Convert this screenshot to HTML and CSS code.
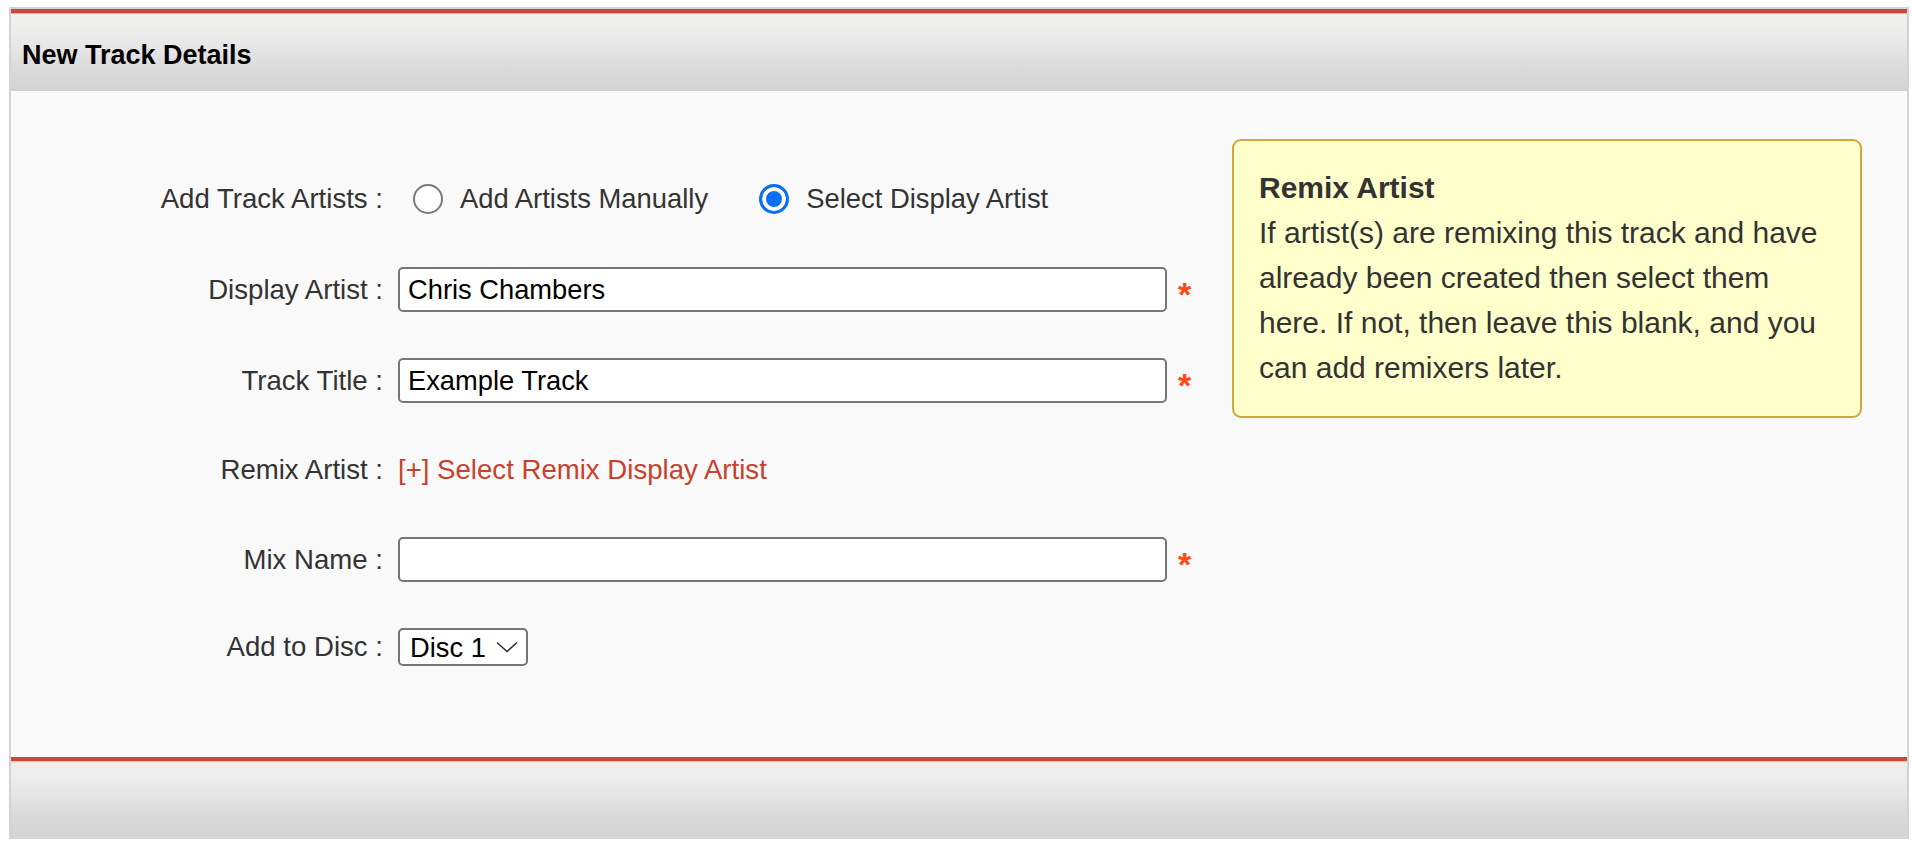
FILE: index.html
```html
<!DOCTYPE html>
<html lang="en">
<head>
<meta charset="utf-8">
<title>New Track Details</title>
<link rel="stylesheet" href="styles.css">
</head>
<body>
<section class="panel">
  <header class="panel-head">
    <h2 class="panel-title">New Track Details</h2>
  </header>
  <div class="panel-body">
    <form class="track-form">
      <div class="row row-radio">
        <span class="label">Add Track Artists :</span>
        <div class="field">
          <label class="radio-opt"><input type="radio" name="mode" class="radio"> Add Artists Manually</label>
          <label class="radio-opt opt-second"><input type="radio" name="mode" class="radio" checked> Select Display Artist</label>
        </div>
      </div>
      <div class="row row-input">
        <label class="label" for="da">Display Artist :</label>
        <div class="field">
          <input id="da" class="text-input" type="text" value="Chris Chambers">
          <span class="req">*</span>
        </div>
      </div>
      <div class="row row-input">
        <label class="label" for="tt">Track Title :</label>
        <div class="field">
          <input id="tt" class="text-input" type="text" value="Example Track">
          <span class="req">*</span>
        </div>
      </div>
      <div class="row row-link">
        <span class="label">Remix Artist :</span>
        <div class="field">
          <a class="add-link" href="#">[+] Select Remix Display Artist</a>
        </div>
      </div>
      <div class="row row-input">
        <label class="label" for="mn">Mix Name :</label>
        <div class="field">
          <input id="mn" class="text-input" type="text" value="">
          <span class="req">*</span>
        </div>
      </div>
      <div class="row row-select">
        <label class="label" for="disc">Add to Disc :</label>
        <div class="field">
          <div class="select-wrap">
            <select id="disc" class="select">
              <option>Disc 1</option>
            </select>
            <svg class="chevron" width="22" height="12" viewBox="0 0 22 12" aria-hidden="true"><path d="M1 1.5 L11 10.5 L21 1.5" fill="none" stroke="#333" stroke-width="1.6"/></svg>
          </div>
        </div>
      </div>
    </form>
    <aside class="help">
      <h3 class="help-title">Remix Artist</h3>
      <p class="help-text">If artist(s) are remixing this track and have already been created then select them here. If not, then leave this blank, and you can add remixers later.</p>
    </aside>
  </div>
  <footer class="panel-foot"></footer>
</section>
</body>
</html>
```

FILE: styles.css
```css
html, body {
  margin: 0;
  padding: 0;
  background: #ffffff;
}

body {
  font-family: "Liberation Sans", Arial, Helvetica, sans-serif;
  color: #333333;
}

.panel {
  margin: 7px 3px 0 9px;
  border: 2px solid #d3d3d3;
  border-bottom: none;
}

.panel-head {
  border-top: 4px solid #c44b3b;
  box-shadow: inset 0 1px 0 #e6ab9c;
  height: 82px;
  padding-top: 6px;
  box-sizing: border-box;
  background: linear-gradient(to bottom, #f3f1ec 0%, #eeeeee 20%, #e6e6e6 45%, #dbdbdb 70%, #d3d3d3 100%);
}

.panel-title {
  margin: 0;
  padding-left: 11px;
  font-size: 27px;
  font-weight: bold;
  line-height: 72px;
  color: #000000;
}

.panel-body {
  display: flex;
  align-items: flex-start;
  height: 666px;
  background: #f9f9f9;
}

.track-form {
  padding-top: 85px;
  display: flex;
  flex-direction: column;
  gap: 46px;
}

.row {
  display: flex;
  align-items: center;
}

.row-radio { height: 45px; }
.row-input { height: 45px; }
.row-link { height: 42px; }
.row-select { height: 38px; }

.label {
  width: 372px;
  text-align: right;
  font-size: 27.6px;
  color: #333333;
  flex: none;
}

.field {
  margin-left: 15px;
  display: flex;
  align-items: center;
  height: 100%;
}

.radio-opt {
  display: flex;
  align-items: center;
  font-size: 27.4px;
  color: #333333;
  gap: 17px;
}

.radio-opt:first-child {
  margin-left: 15px;
}

.opt-second {
  margin-left: 51px;
}

.radio {
  appearance: none;
  -webkit-appearance: none;
  margin: 0;
  width: 30px;
  height: 30px;
  border-radius: 50%;
  border: 2px solid #7a7a7a;
  background: #ffffff;
  box-sizing: border-box;
}

.radio:checked {
  border: 3px solid #0a6ff6;
  background: #0a6ff6;
  box-shadow: inset 0 0 0 4px #ffffff;
}

.text-input {
  width: 769px;
  height: 45px;
  box-sizing: border-box;
  border: 2px solid #767676;
  border-radius: 5px;
  background: #ffffff;
  padding: 0 8px;
  font-family: "Liberation Sans", Arial, Helvetica, sans-serif;
  font-size: 27.3px;
  color: #000000;
  outline: none;
}

.req {
  align-self: flex-start;
  margin-left: 11px;
  margin-top: 10px;
  font-size: 34px;
  line-height: 34px;
  font-weight: bold;
  color: #ff4a12;
}

.add-link {
  font-size: 27.6px;
  color: #c9412b;
  text-decoration: none;
}

.select-wrap {
  position: relative;
  display: flex;
}

.select {
  appearance: none;
  -webkit-appearance: none;
  width: 130px;
  height: 38px;
  box-sizing: border-box;
  border: 2px solid #767676;
  border-radius: 5px;
  background: #ffffff;
  padding: 0 0 0 10px;
  font-family: "Liberation Sans", Arial, Helvetica, sans-serif;
  font-size: 27.3px;
  color: #000000;
  outline: none;
}

.chevron {
  position: absolute;
  left: 98px;
  top: 13px;
  pointer-events: none;
}

.help {
  margin: 48px 45px 0 auto;
  width: 570px;
  padding: 24px 31px 26px 25px;
  border: 2px solid #d4a53a;
  border-radius: 9px;
  background: #ffffcc;
  color: #333333;
  font-size: 30px;
  line-height: 45px;
}

.help-title {
  margin: 0;
  font-size: 30px;
  font-weight: bold;
  line-height: 45px;
}

.help-text {
  margin: 0;
}

.panel-foot {
  height: 82px;
  box-sizing: border-box;
  border-top: 4px solid #c44b3b;
  border-bottom: 2px solid #d6d6d6;
  background: linear-gradient(to bottom, #e9b7a8 0px, #f1efea 2px, #eeeeee 18%, #e5e5e5 45%, #dadada 72%, #d4d4d4 100%);
}
```
